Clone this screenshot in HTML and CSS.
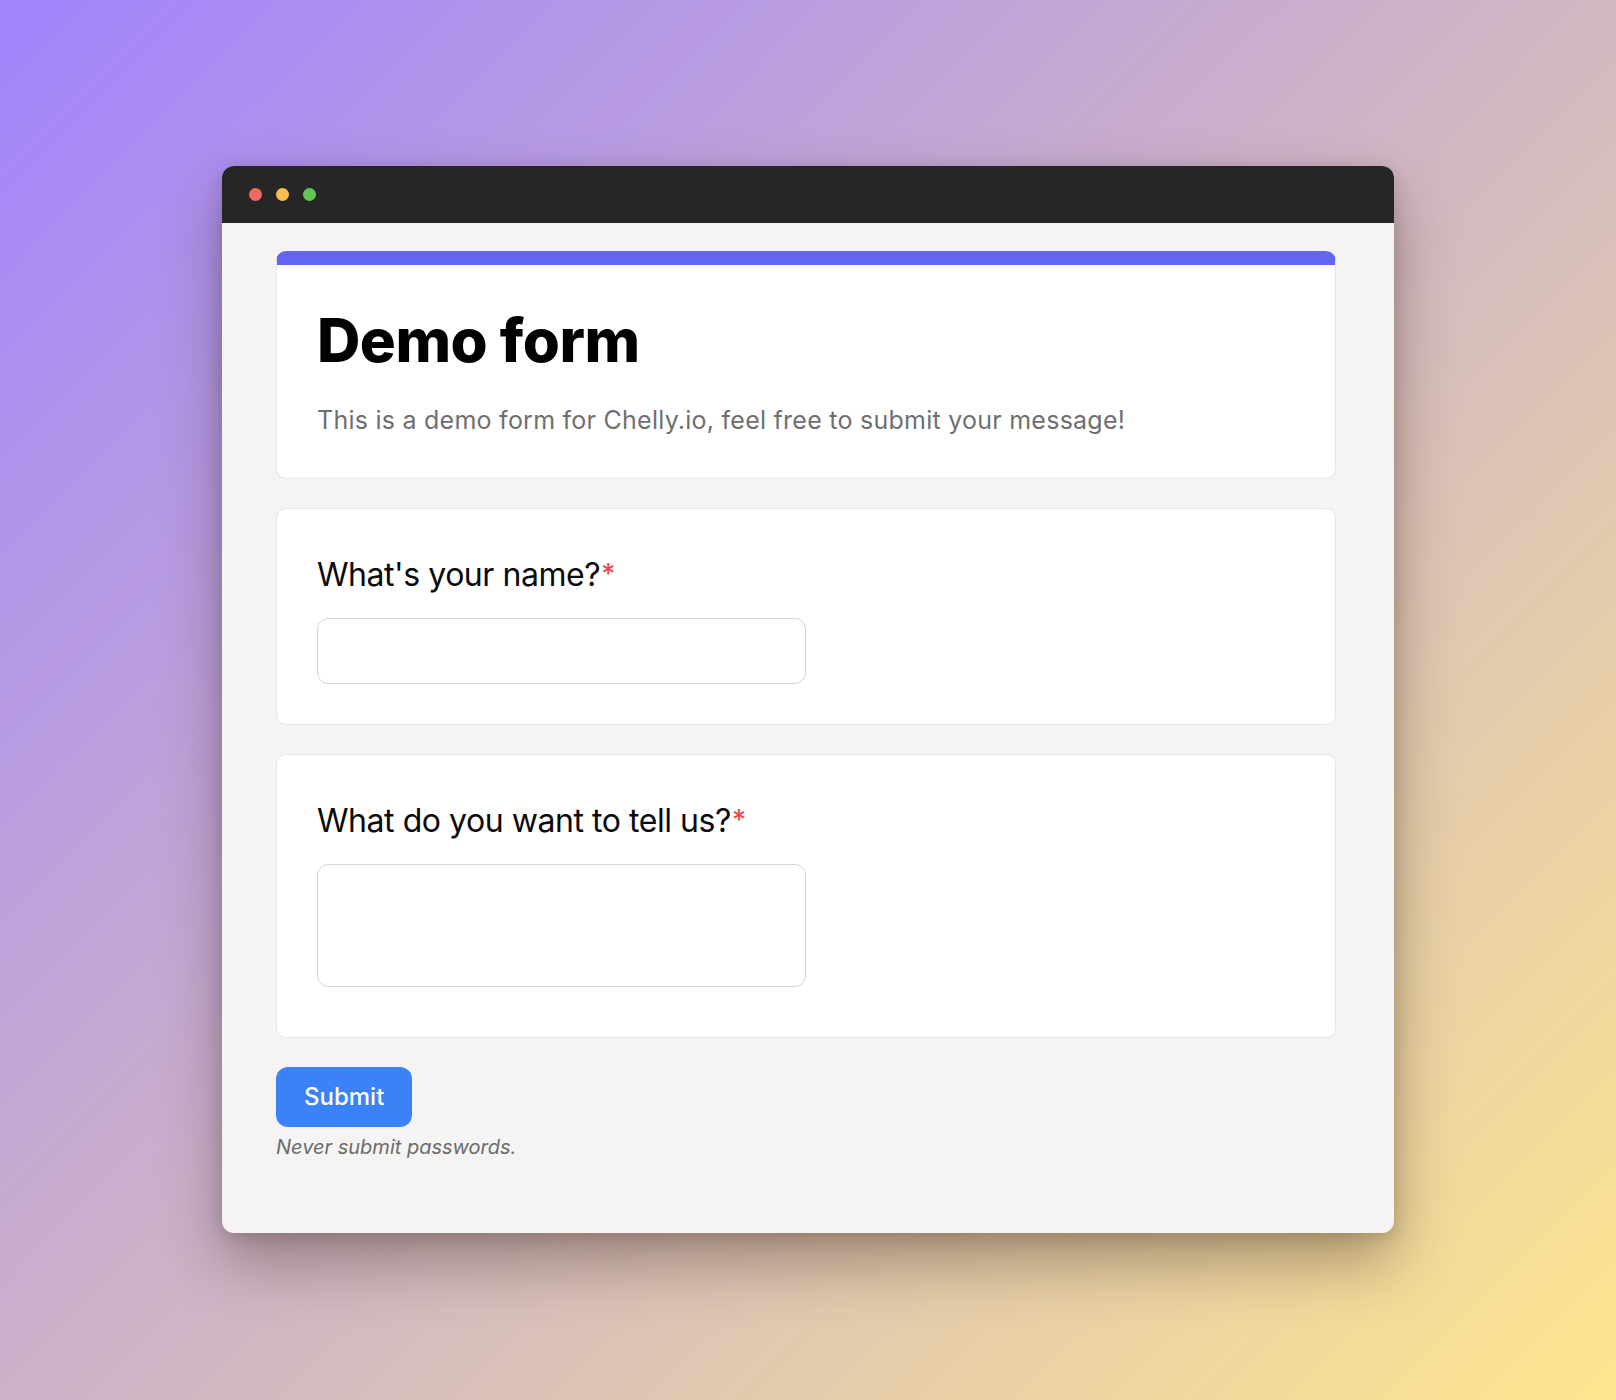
FILE: index.html
```html
<!DOCTYPE html>
<html lang="en">
<head>
<meta charset="utf-8">
<title>Demo form</title>
<link rel="stylesheet" href="styles.css">
</head>
<body>
  <div class="window">
    <div class="titlebar">
      <span class="dot dot-red"></span>
      <span class="dot dot-yellow"></span>
      <span class="dot dot-green"></span>
    </div>
    <div class="window-body">
      <form class="form">
        <section class="card card-header">
          <h1 class="form-title">Demo form</h1>
          <p class="form-desc">This is a demo form for Chelly.io, feel free to submit your message!</p>
        </section>
        <section class="card">
          <label class="field-label">What's your name?<span class="req">*</span></label>
          <input class="field-input" type="text">
        </section>
        <section class="card">
          <label class="field-label">What do you want to tell us?<span class="req">*</span></label>
          <textarea class="field-textarea"></textarea>
        </section>
        <div class="actions">
          <button class="submit-btn" type="button">Submit</button>
          <p class="note">Never submit passwords.</p>
        </div>
      </form>
    </div>
  </div>
</body>
</html>
```
FILE: styles.css
```css
* {
  box-sizing: border-box;
}

html, body {
  margin: 0;
  padding: 0;
}

body {
  width: 1616px;
  height: 1400px;
  overflow: hidden;
  background: linear-gradient(135deg, #a183fd 0%, #fde68e 100%);
  font-family: Inter, "Noto Sans", "Liberation Sans", sans-serif;
  padding-top: 166px;
  padding-left: 222px;
}

.window {
  width: 1172px;
  border-radius: 12px;
  overflow: hidden;
  background: #f5f4f2;
  box-shadow: 0 30px 60px rgba(60, 40, 30, 0.38), 0 4px 18px rgba(0, 0, 0, 0.14);
}

.titlebar {
  height: 57px;
  background: #262626;
  display: flex;
  align-items: center;
  gap: 14px;
  padding-left: 27px;
}

.dot {
  width: 13px;
  height: 13px;
  border-radius: 50%;
  display: block;
}

.dot-red { background: #ec6a5e; }
.dot-yellow { background: #f4bf4f; }
.dot-green { background: #61c554; }

.window-body {
  padding: 28px 58px 72px 54px;
}

.form {
  display: flex;
  flex-direction: column;
  gap: 29px;
}

.card {
  background: #ffffff;
  border: 1px solid #e7e6e4;
  border-radius: 10px;
  padding: 40px;
}

.card-header {
  border-top: 14px solid #6366f1;
}

.form-title {
  margin: 0;
  font-size: 60px;
  line-height: 70px;
  font-weight: 800;
  color: #000;
  letter-spacing: -0.5px;
}

.form-desc {
  margin: 27px 0 0;
  font-size: 25px;
  line-height: 36px;
  color: #6f6f6f;
  letter-spacing: 0.25px;
}

.field-label {
  display: block;
  font-size: 32px;
  line-height: 50px;
  color: #0a0a0a;
  margin-bottom: 18px;
  letter-spacing: -0.45px;
}

.req {
  color: #ef4444;
  font-size: 28px;
  vertical-align: 2px;
  margin-left: 1px;
}

.field-input,
.field-textarea {
  display: block;
  width: 489px;
  border: 1.5px solid #d6d6d6;
  border-radius: 11px;
  background: #fff;
  font-family: inherit;
  font-size: 24px;
  outline: none;
  margin: 0;
}

.field-input {
  height: 66px;
}

.field-textarea {
  height: 123px;
  resize: none;
  margin-bottom: 10px;
}

.actions {
  display: flex;
  flex-direction: column;
  align-items: flex-start;
}

.submit-btn {
  font-family: inherit;
  font-size: 24px;
  line-height: 36px;
  font-weight: 500;
  color: #fff;
  background: #3b82f6;
  border: none;
  border-radius: 12px;
  padding: 12px 28px;
  margin-left: 0;
}

.note {
  margin: 6px 0 0;
  font-size: 20px;
  line-height: 28px;
  font-style: italic;
  color: #6b6b6b;
}
```
